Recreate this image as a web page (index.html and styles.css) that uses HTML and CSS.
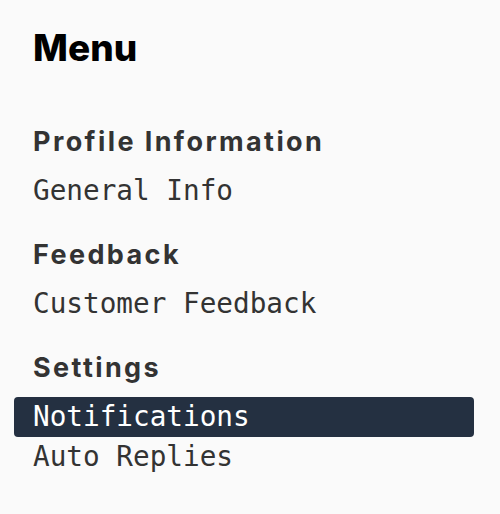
FILE: index.html
```html
<!DOCTYPE html>
<html lang="en">
    <head>
        <meta charset="utf-8">
        <meta name="viewport" content="width=device-width,initial-scale=1">
        <title>Menu</title>
        <link rel="stylesheet" href="styles.css">
    </head>
<body>
    <nav id="menu">
        <h1 class="menu-title">Menu</h1>
        <div class="menu-group">
            <h2 class="group-title">Profile Information</h2>
            <a class="menu-item">General Info</a>
        </div>
        <div class="menu-group">
            <h2 class="group-title">Feedback</h2>
            <a class="menu-item">Customer Feedback</a>
        </div>
        <div class="menu-group">
            <h2 class="group-title">Settings</h2>
            <a class="menu-item active">Notifications</a>
            <a class="menu-item">Auto Replies</a>
        </div>
    </nav>
</body>
</html>
```

FILE: styles.css
```css
html, body {
    margin: 0;
    background: #fafafa;
}

#menu {
    display: flex;
    flex-direction: column;
    gap: 24px;
    padding: 24px 26px 0 14px;
}

.menu-title {
    margin: 0 0 26px;
    padding-left: 19px;
    font-family: Inter, sans-serif;
    font-size: 37px;
    line-height: 48px;
    font-weight: 800;
    color: #000;
}

.menu-group {
    display: flex;
    flex-direction: column;
}

.group-title {
    margin: 0 0 9px;
    padding-left: 19px;
    font-family: Inter, sans-serif;
    font-size: 27px;
    line-height: 40px;
    font-weight: 700;
    letter-spacing: 2.4px;
    color: #333;
}

.menu-item {
    display: block;
    padding-left: 19px;
    font-family: "DejaVu Sans Mono", monospace;
    font-size: 27.7px;
    line-height: 40px;
    color: #333;
    border-radius: 4px;
    cursor: pointer;
}

.menu-item.active {
    background: #243041;
    color: #fff;
}
```
